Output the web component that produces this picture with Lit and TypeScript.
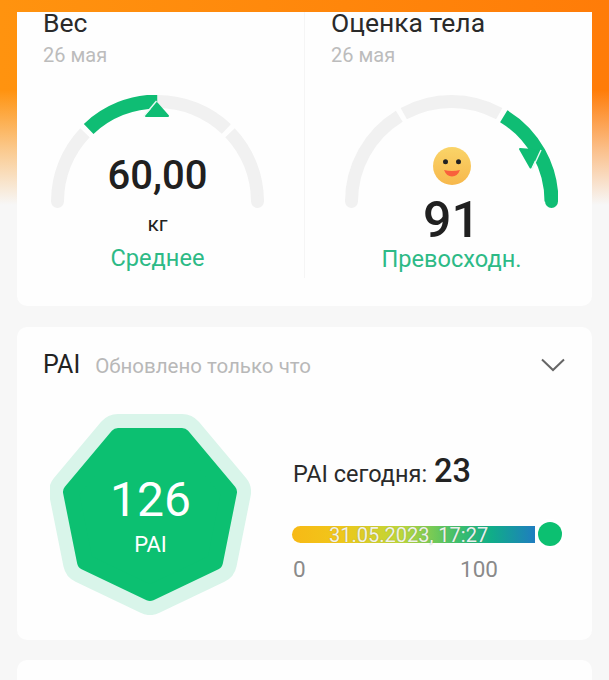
import { LitElement, html, css, svg } from "lit";
import { customElement } from "lit/decorators.js";

const C = 106.5;
const R = 100;
const pt = (deg: number) => {
  const a = (deg * Math.PI) / 180;
  return `${(C + R * Math.cos(a)).toFixed(2)} ${(C - R * Math.sin(a)).toFixed(2)}`;
};
const arc = (from: number, to: number, cls: string) =>
  svg`<path class=${cls} d="M${pt(from)} A${R} ${R} 0 0 1 ${pt(to)}"></path>`;
const cap = (deg: number, cls: string) => {
  const a = (deg * Math.PI) / 180;
  return svg`<circle class=${cls + "-dot"} cx=${C + R * Math.cos(a)} cy=${C - R * Math.sin(a)} r="6.5"></circle>`;
};

@customElement("app-root")
export class AppRoot extends LitElement {
  static styles = css`
    :host {
      display: block;
      width: 609px;
      height: 680px;
      overflow: hidden;
      box-sizing: border-box;
      padding: 12px 17px 0;
      font-family: Roboto, "Noto Sans", sans-serif;
      color: #222;
      background:
        linear-gradient(180deg, rgba(247, 247, 247, 0) 90px, rgba(247, 247, 247, 0.55) 150px, #f7f7f7 205px),
        linear-gradient(90deg, #ff930f, #ff7c08);
    }
    .card {
      background: #fefefe;
      border-radius: 10px;
    }
    .card.top {
      border-radius: 0 0 10px 10px;
      display: grid;
      grid-template-columns: 288px 287px;
      padding-bottom: 28px;
    }
    .cell {
      padding: 1px 0 5px 26px;
    }
    .cell.left {
      border-right: 1px solid #f5f5f5;
    }
    .title {
      font-size: 26.5px;
      line-height: 20px;
      color: #2a2a2a;
    }
    .date {
      margin-top: 10px;
      font-size: 20px;
      line-height: 24px;
      color: #bcbcbc;
    }
    .gauge {
      display: grid;
      width: 213px;
      margin-top: 28px;
    }
    .gauge.g-left {
      margin-left: 8px;
    }
    .gauge.g-right {
      margin-left: 14px;
    }
    .gauge > * {
      grid-area: 1 / 1;
    }
    .gauge svg {
      display: block;
    }
    .track {
      fill: none;
      stroke: #f1f1f1;
      stroke-width: 13;
    }
    .track-dot {
      fill: #f1f1f1;
    }
    .on {
      fill: none;
      stroke: #0fbd74;
      stroke-width: 14;
    }
    .on-dot,
    .tri {
      fill: #0fbd74;
    }
    .tri {
      stroke: #0fbd74;
      stroke-width: 2;
      stroke-linejoin: round;
    }
    .tri-edge {
      fill: none;
      stroke: #eafaf3;
      stroke-width: 1.4;
    }
    .readout {
      display: flex;
      flex-direction: column;
      align-items: center;
    }
    .big {
      margin-top: 61px;
      font-size: 40px;
      line-height: 40px;
      font-weight: 500;
      color: #202020;
    }
    .unit {
      margin-top: 16px;
      font-size: 21px;
      line-height: 24px;
      color: #222;
    }
    .status {
      margin-top: 8px;
      font-size: 23.6px;
      line-height: 28px;
      color: #2dba86;
      white-space: nowrap;
    }
    .smile {
      display: block;
      margin-top: 52px;
    }
    .score {
      margin-top: 10px;
      font-size: 50px;
      line-height: 50px;
      font-weight: 500;
      color: #202020;
    }
    .status.tight {
      margin-top: 0;
    }
    .pai {
      margin-top: 21px;
      height: 313px;
      box-sizing: border-box;
      padding: 23px 27px 0 26px;
    }
    .head {
      display: flex;
      align-items: baseline;
      gap: 15px;
      height: 30px;
    }
    .head-title {
      font-size: 25px;
      line-height: 30px;
      color: #222;
    }
    .head-sub {
      font-size: 20.5px;
      line-height: 30px;
      color: #b8b8b8;
    }
    .chev {
      margin-left: auto;
      align-self: center;
      display: block;
    }
    .chev path {
      fill: none;
      stroke: #666;
      stroke-width: 2;
    }
    .pai-body {
      display: flex;
      margin: 34px 0 0 7px;
    }
    .hex {
      display: grid;
      width: 201px;
      height: 201px;
      flex: none;
    }
    .hex > * {
      grid-area: 1 / 1;
    }
    .hex-out {
      fill: #d9f5ea;
      stroke: #d9f5ea;
      stroke-width: 44;
      stroke-linejoin: round;
    }
    .hex-in {
      fill: #0cc071;
      stroke: #0cc071;
      stroke-width: 16;
      stroke-linejoin: round;
    }
    .hex-text {
      display: flex;
      flex-direction: column;
      align-items: center;
      color: #fff;
    }
    .hex-num {
      margin-top: 61px;
      font-size: 48px;
      line-height: 50px;
    }
    .hex-lab {
      margin-top: 7px;
      font-size: 22px;
      line-height: 26px;
    }
    .today-col {
      margin: 39px 0 0 42px;
    }
    .today {
      display: flex;
      align-items: baseline;
      gap: 7px;
      height: 36px;
      line-height: 36px;
      font-size: 23.5px;
      color: #2a2a2a;
    }
    .today b {
      font-size: 32.5px;
      font-weight: 500;
      color: #222;
    }
    .bar-wrap {
      position: relative;
      width: 270px;
      margin-top: 37px;
    }
    .bar {
      margin-left: -1px;
      width: 243px;
      height: 17px;
      border-radius: 9px 0 0 9px;
      background: linear-gradient(90deg, #f7b916 0%, #f0c71a 20%, #bcd73a 45%, #3fbf6c 68%, #10ad88 82%, #1f7dc0 100%);
    }
    .stamp {
      position: absolute;
      left: 36px;
      top: -3px;
      font-size: 20px;
      line-height: 24px;
      white-space: nowrap;
      color: rgba(255, 255, 255, 0.9);
      text-shadow: 0 0 1px rgba(90, 90, 90, 0.55);
    }
    .dot {
      position: absolute;
      left: 245px;
      top: -4px;
      width: 24px;
      height: 24px;
      border-radius: 50%;
      background: #0cc071;
      box-shadow: 0 0 0 3px #fff;
    }
    .scale {
      display: flex;
      justify-content: space-between;
      width: 205px;
      margin-top: 13px;
      font-size: 22.5px;
      line-height: 26px;
      color: #8a8a8a;
    }
    .next {
      margin-top: 20px;
      height: 60px;
    }
  `;

  render() {
    return html`
      <div class="card top">
        <div class="cell left">
          <div class="title">Вес</div>
          <div class="date">26 мая</div>
          <div class="gauge g-left">
            <svg width="213" height="114" viewBox="0 0 213 114">
              ${cap(180, "track")} ${arc(180, 136.5, "track")} ${arc(133.5, 90, "on")}
              ${arc(90, 46.5, "track")} ${arc(43.5, 0, "track")} ${cap(0, "track")}
              <polygon class="tri" points="95,21 117,21 106,8.5"></polygon>
              <path class="tri-edge" d="M92.5 21.5 L105.5 6"></path>
            </svg>
            <div class="readout">
              <div class="big">60,00</div>
              <div class="unit">кг</div>
              <div class="status">Среднее</div>
            </div>
          </div>
        </div>
        <div class="cell">
          <div class="title">Оценка тела</div>
          <div class="date">26 мая</div>
          <div class="gauge g-right">
            <svg width="213" height="114" viewBox="0 0 213 114">
              ${cap(180, "track")} ${arc(180, 121.5, "track")} ${arc(118.5, 61.5, "track")}
              ${arc(58.5, 0, "on")} ${cap(0, "on")}
              <polygon class="tri" points="175,54 193.5,55.5 185.5,72.5"></polygon>
              <path class="tri-edge" d="M196 55 L187 74.5"></path>
            </svg>
            <div class="readout">
              <svg class="smile" width="38" height="38" viewBox="0 0 38 38">
                <defs>
                  <linearGradient id="face" x1="0" y1="0" x2="0" y2="1">
                    <stop offset="0" stop-color="#fad468"></stop>
                    <stop offset="1" stop-color="#f7b84c"></stop>
                  </linearGradient>
                </defs>
                <circle cx="19" cy="19" r="19" fill="url(#face)"></circle>
                <circle cx="12.5" cy="14.7" r="2.5" fill="#222"></circle>
                <circle cx="25.5" cy="14.7" r="2.5" fill="#222"></circle>
                <path d="M11 23 Q19 25 27 23 Q24.5 29.5 19 29.5 Q13.5 29.5 11 23 Z" fill="#f9603c"></path>
              </svg>
              <div class="score">91</div>
              <div class="status tight">Превосходн.</div>
            </div>
          </div>
        </div>
      </div>

      <div class="card pai">
        <div class="head">
          <span class="head-title">PAI</span>
          <span class="head-sub">Обновлено только что</span>
          <svg class="chev" width="24" height="14" viewBox="0 0 24 14">
            <path d="M1 1.5 L12 12 L23 1.5"></path>
          </svg>
        </div>
        <div class="pai-body">
          <div class="hex">
            <svg width="201" height="201" viewBox="50 414 201 201">
              <polygon class="hex-out" points="118,436 182,436 229,492 215,562 150,593 85,562 71,492"></polygon>
              <polygon class="hex-in" points="118,436 182,436 229,492 215,562 150,593 85,562 71,492"></polygon>
            </svg>
            <div class="hex-text">
              <div class="hex-num">126</div>
              <div class="hex-lab">PAI</div>
            </div>
          </div>
          <div class="today-col">
            <div class="today">PAI сегодня: <b>23</b></div>
            <div class="bar-wrap">
              <div class="bar"></div>
              <div class="stamp">31.05.2023, 17:27</div>
              <div class="dot"></div>
            </div>
            <div class="scale"><span>0</span><span>100</span></div>
          </div>
        </div>
      </div>

      <div class="card next"></div>
    `;
  }
}
